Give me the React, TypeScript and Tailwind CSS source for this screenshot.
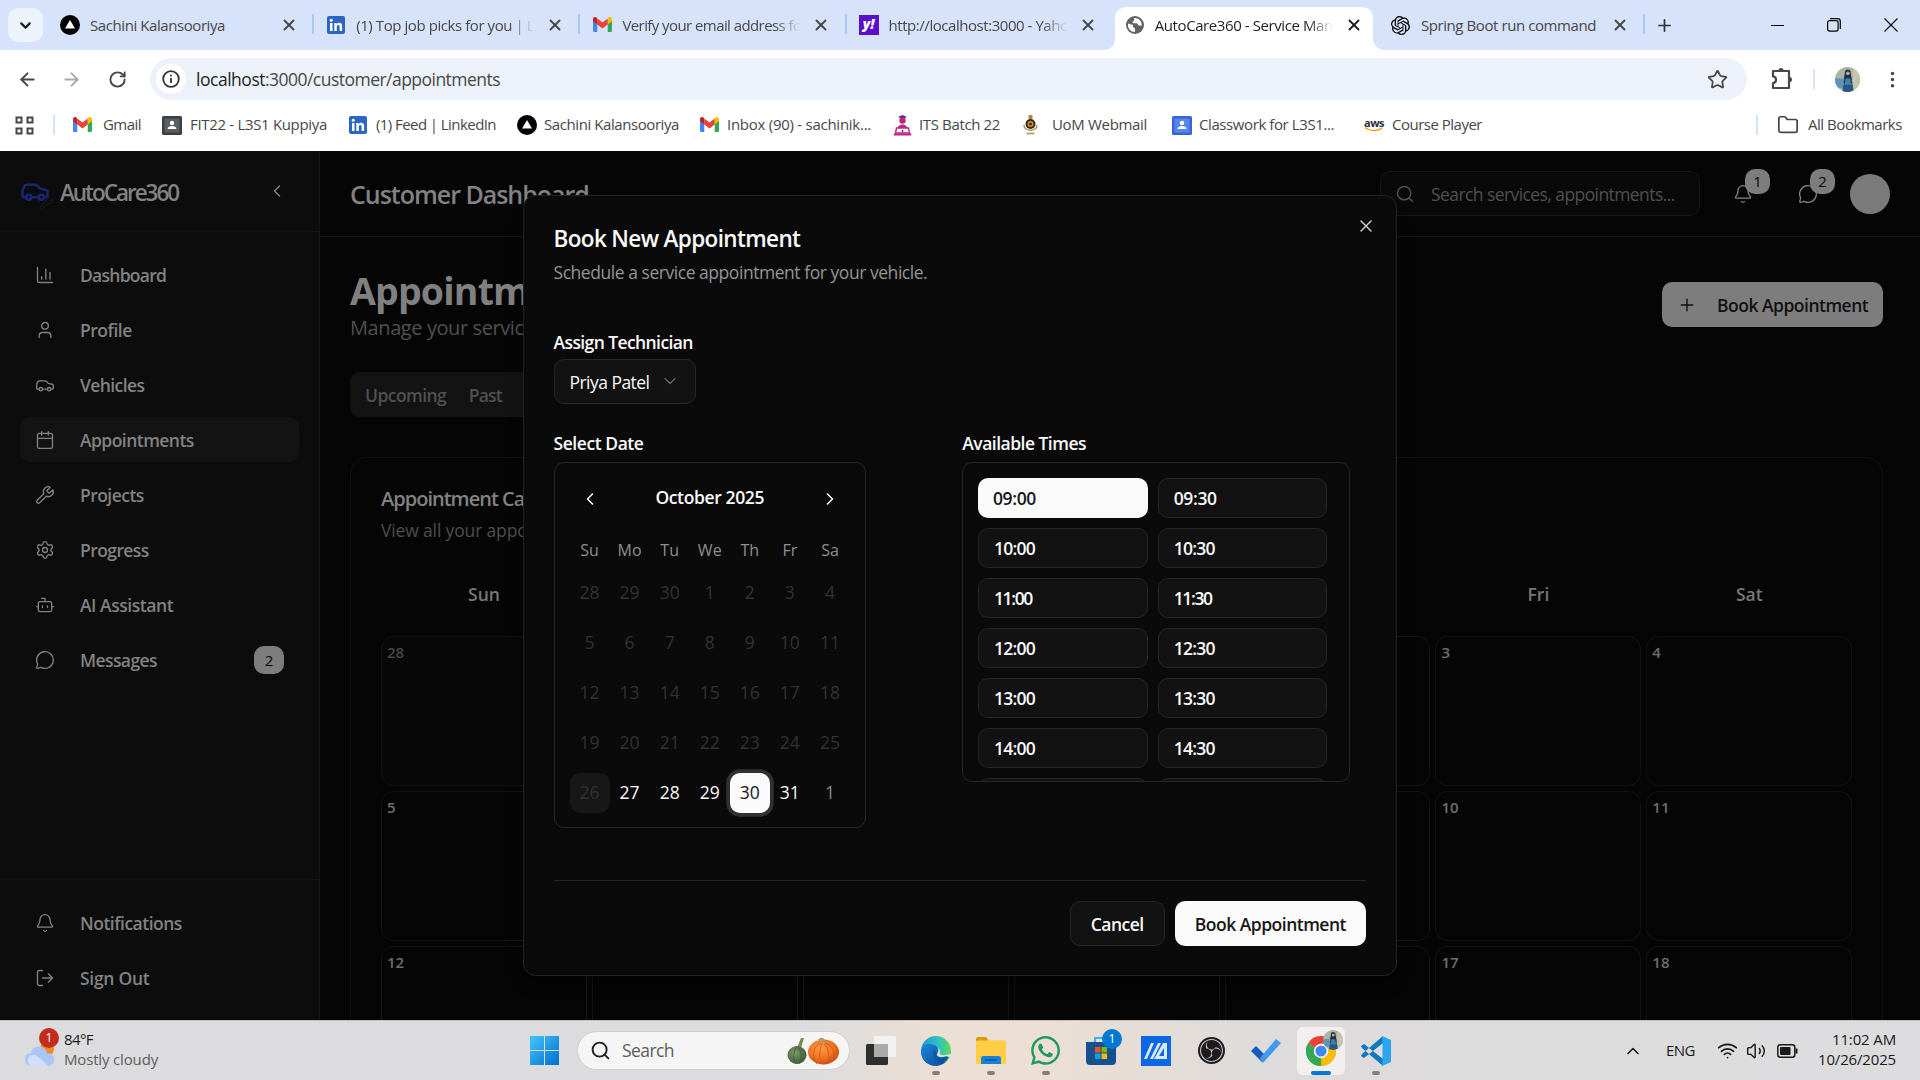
import React, { useLayoutEffect, useRef, useState } from "react";
import {
  ArrowLeft, ArrowRight, BarChart3, Bell, Bot, Calendar, Car, ChevronDown, ChevronLeft, ChevronRight,
  ChevronUp, Folder, LogOut, MessageCircle, MoreVertical, Plus, RotateCw, Search, Settings, Star,
  User, Volume2, Wifi, Wrench, X,
} from "lucide-react";
import { SiOpenai, SiObsstudio } from "react-icons/si";
import { FaWhatsapp } from "react-icons/fa";

/* Text run whose letter spacing is tuned so that it occupies a known width. */
function Fit({ w, className = "", children }: { w: number; className?: string; children: string }) {
  const ref = useRef<HTMLSpanElement>(null);
  const [ls, setLs] = useState(0);
  useLayoutEffect(() => {
    const el = ref.current as any;
    const zoom = el.currentCSSZoom ?? 1;
    setLs((w - el.getBoundingClientRect().width / zoom) / children.length);
  }, []);
  return (
    <span ref={ref} data-fit className={"inline-block whitespace-pre " + className} style={{ letterSpacing: ls }}>
      {children}
    </span>
  );
}

/* ---------- Brand marks ---------- */
const Gmail = ({ s = 19 }: { s?: number }) => (
  <svg width={s} height={s * 0.8} viewBox="0 0 20 16">
    <path d="M0 2.5V14.5A1.2 1.2 0 0 0 1.2 15.7H4.5V6Z" fill="#4285f4" />
    <path d="M20 2.5V14.5A1.2 1.2 0 0 1 18.8 15.7H15.5V6Z" fill="#34a853" />
    <path d="M15.5 2V7.8L20 4.3V2.3C20 .2 17.8-.6 16.3 .5Z" fill="#fbbc04" />
    <path d="M4.5 7.8V1.6L10 5.8L15.5 1.6V7.8L10 12Z" fill="#ea4335" />
    <path d="M0 2.3V4.3L4.5 7.8V2L3.7 .5C2.200-.6 0 .2 0 2.300Z" fill="#c5221f" />
  </svg>
);
const LinkedIn = () => (
  <span className="flex size-[18px] items-center justify-center rounded-[2px] bg-[#2c66c3]">
    <svg width="14" height="14" viewBox="0 0 14 14" fill="#fff">
      <rect x="1" y="5" width="2.500" height="8" />
      <circle cx="2.250" cy="2.300" r="1.500" />
      <path d="M5.300 5h2.400v1.200C8.300 5.200 9.200 4.800 10.200 4.800c2.200 0 2.900 1.400 2.900 3.500V13h-2.500V8.800c0-1.100-.3-1.900-1.300-1.900s-1.500.8-1.500 1.900V13H5.300Z" />
    </svg>
  </span>
);
const Triangle = () => (
  <svg width="20" height="20" viewBox="0 0 20 20"><circle cx="10" cy="10" r="10" /><path d="M10 5L15 13.500H5Z" fill="#fff" /></svg>
);
const Yahoo = () => (
  <span className="flex size-5 items-center justify-center bg-[#5b0fc8] pb-[2px] font-sans text-[14px] font-black italic leading-none text-white">y!</span>
);
const Globe = () => (
  <svg width="18" height="18" viewBox="0 0 18 18">
    <circle cx="9" cy="9" r="9" fill="#5f6368" />
    <path d="M2 7.500L7 9v2l2 1.500v3.400A7 7 0 0 1 2 7.500ZM7.500 2.200C9 3 8.200 5 7 5.300c-1 .7-.4 2 1 2h3l1.500 2.200h3.400A7 7 0 0 0 7.500 2.200Z" fill="#fff" />
  </svg>
);
const Classroom = ({ bg, inner }: { bg: string; inner: string }) => (
  <svg width="20" height="19" viewBox="0 0 20 19">
    <rect width="20" height="19" rx="1.500" fill={bg} /><rect x="2.500" y="2.500" width="15" height="14" fill={inner} />
    <circle cx="10" cy="7" r="2.200" fill="#fff" /><path d="M5.500 13c0-4 9-4 9 0Z" fill="#fff" />
  </svg>
);
const ItsMark = () => (
  <svg width="19" height="21" viewBox="0 0 19 21">
    <path d="M5 2L9.500 0L14 2L9.500 4Z" fill="#5b2a86" />
    <circle cx="9.500" cy="5.500" r="3.200" fill="#c2257f" />
    <path d="M4.500 14C4.500 8 14.500 8 14.500 14Z" fill="#c2257f" />
    <path d="M3.500 13h12l1 5h-14Z" fill="#fff" stroke="#c2257f" strokeWidth="1.400" />
    <rect x="0.500" y="18.500" width="18" height="2" rx="1" fill="#c2257f" /><circle cx="9.500" cy="16" r="1" fill="#5b2a86" />
  </svg>
);
const UomMark = () => (
  <svg width="17" height="20" viewBox="0 0 17 20">
    <rect x="6.500" y="0" width="4" height="4" rx="1" fill="#a9853f" />
    <circle cx="8.500" cy="9" r="5" fill="#3a2417" /><circle cx="8.500" cy="9" r="3" fill="#c79a2d" /><circle cx="8.500" cy="9" r="1.500" fill="#5a2a10" />
    <path d="M2 10C2 17 15 17 15 10" fill="none" stroke="#a8946c" strokeWidth="1.600" /><path d="M4.500 18.500h8" stroke="#b9a67c" strokeWidth="2" />
  </svg>
);
const Aws = () => (
  <span className="flex w-5 flex-col items-center leading-none">
    <span className="text-[11px] font-bold leading-[9px] tracking-[-0.5px] text-[#252f3e]">aws</span>
    <svg width="20" height="5" viewBox="0 0 20 5"><path d="M1 .8C6 4.500 13 4.500 18 1.200" fill="none" stroke="#f90" strokeWidth="1.400" /></svg>
  </span>
);
const Puzzle = () => (
  <svg width="22" height="24" viewBox="0 0 22 24" fill="none" stroke="#474747" strokeWidth="2.200" strokeLinejoin="round">
    <path d="M2 4H18V21H2V16C6 16 6 9.500 2 9.500Z" /><path d="M7.500 3.500a2.500 2.500 0 0 1 5 0ZM18.500 10a2.500 2.500 0 0 1 0 5Z" fill="#474747" stroke="none" />
  </svg>
);
const Portrait = ({ s }: { s: number }) => (
  <svg width={s} height={s} viewBox="0 0 24 24" className="rounded-full">
    <rect width="24" height="24" fill="#a9b5a2" /><rect y="11" width="8" height="9" fill="#5d93b5" /><rect x="17" width="7" height="24" fill="#c9c2ae" />
    <path d="M9.500 5c0-3.500 5.500-3.500 5.500 0l1.500 10h-8.500Z" fill="#1c3349" /><circle cx="12.300" cy="6" r="1.800" fill="#c99f86" />
    <path d="M8.500 11h7.500l1 7H8Z" fill="#4a80a8" /><path d="M8 17h9l1 7H7Z" fill="#28588a" /><path d="M10 8l-1 8M14.800 8l1 8" stroke="#1c3349" />
  </svg>
);

/* ---------- Browser chrome ---------- */
const tabs = [
  { icon: <Triangle />, title: "Sachini Kalansooriya", w: 135 },
  { icon: <LinkedIn />, title: "(1) Top job picks for you | L", w: 178 },
  { icon: <Gmail />, title: "Verify your email address fo", w: 179 },
  { icon: <Yahoo />, title: "http://localhost:3000 - Yaho", w: 180 },
  { icon: <Globe />, title: "AutoCare360 - Service Man", w: 178 },
  { icon: <SiOpenai size={19} />, title: "Spring Boot run command", w: 175 },
];
const tabMask = "[mask-image:linear-gradient(to_right,#000_84%,transparent_98%)]";

function TabStrip() {
  return (
    <div className="flex h-[50px] bg-[#d7e2fb]">
      <div className="ml-2 mt-2 flex h-[34px] w-[35px] items-center justify-center rounded-[10px] bg-[#ecf3fd]">
        <ChevronDown size={17} strokeWidth={3} color="#1f1f1f" />
      </div>
      <div className="ml-[5px] flex">
        {tabs.map((t, i) => {
          const active = i === 4;
          return (
            <div key={t.title} className="relative flex h-[50px] w-[266.200px] items-center pl-3">
              {active && (
                <svg className="absolute left-[-10px] top-[7px]" width="282" height="43" viewBox="0 0 282 43" fill="#fff">
                  <path d="M0 43C9 43 12 38 12 31V12C12 4 17 0 24 0H258C266 0 270 4 270 12V31C270 38 275 43 282 43Z" />
                </svg>
              )}
              <span className="relative flex w-5 items-center justify-center">{t.icon}</span>
              <span className={"relative ml-[10px] w-[182px] overflow-hidden text-[15px] leading-5 " + (i === 0 || i === 5 ? "" : tabMask) + (active ? " text-[#1f1f1f]" : " text-[#474747]")}>
                <Fit w={t.w}>{t.title}</Fit>
              </span>
              <X className="relative ml-[8px]" size={18} strokeWidth={2.500} color={active ? "#1f1f1f" : "#474747"} />
              {i !== 3 && i !== 4 && <span className="absolute right-0 top-[14px] h-5 w-[2px] rounded bg-[#a9c5f9]" />}
            </div>
          );
        })}
      </div>
      <div className="flex w-[38px] items-center justify-center"><Plus size={19} strokeWidth={2.200} color="#333" /></div>
      <div className="ml-auto flex items-center">
        <div className="flex w-[57px] justify-center"><span className="h-px w-[13px] bg-black" /></div>
        <div className="flex w-[56px] justify-center">
          <svg width="14" height="14" viewBox="0 0 14 14" fill="none" stroke="#000" strokeWidth="1.200"><rect x="0.600" y="2.600" width="10.500" height="10.500" rx="2" /><path d="M3 .6H10.500A2.800 2.800 0 0 1 13.300 3.400V11" /></svg>
        </div>
        <div className="flex w-[58px] justify-center"><svg width="14" height="14" viewBox="0 0 14 14" stroke="#111" strokeWidth="1.200"><path d="M.5 .5L13.500 13.500M13.500 .5L.5 13.500" /></svg></div>
      </div>
    </div>
  );
}

function Toolbar() {
  return (
    <div className="flex h-[58px] items-center bg-white">
      <div className="flex w-[150px] items-center pl-[17px]">
        <ArrowLeft size={21} strokeWidth={2.200} color="#474747" />
        <ArrowRight className="ml-[23px]" size={21} strokeWidth={2.200} color="#aaaaaa" />
        <RotateCw className="ml-[26px]" size={19} strokeWidth={2.400} color="#474747" />
      </div>
      <div className="flex h-[42px] w-[1597px] items-center rounded-full bg-[#edf2fa] pl-[6px]">
        <span className="flex size-[30px] items-center justify-center rounded-full bg-white">
          <svg width="18" height="18" viewBox="0 0 18 18" fill="none" stroke="#333" strokeWidth="1.800"><circle cx="9" cy="9" r="7.800" /><path d="M9 8v5M9 4.800v1.800" /></svg>
        </span>
        <span className="ml-[10px] flex text-[17.5px] leading-6">
          <Fit w={69} className="text-[#1f1f1f]">localhost</Fit>
          <Fit w={235} className="text-[#474747]">:3000/customer/appointments</Fit>
        </span>
        <Star className="ml-auto mr-[19px]" size={21} strokeWidth={2} color="#474747" />
      </div>
      <div className="ml-[24px]"><Puzzle /></div>
      <span className="ml-[20px] h-5 w-[2px] bg-[#d3e3fd]" />
      <div className="ml-[20px]"><Portrait s={25} /></div>
      <MoreVertical className="ml-[22px]" size={21} fill="#474747" color="#474747" />
    </div>
  );
}

const bookmarks: [React.ReactNode, number, string, number, number][] = [
  [<Gmail />, 30, "Gmail", 38, 89],
  [<Classroom bg="#3c4043" inner="#5a5d61" />, 28, "FIT22 - L3S1 Kuppiya", 137, 187],
  [<LinkedIn />, 27, "(1) Feed | LinkedIn", 120, 168],
  [<Triangle />, 27, "Sachini Kalansooriya", 135, 183],
  [<Gmail />, 27, "Inbox (90) - sachinik...", 144, 193],
  [<ItsMark />, 26, "ITS Batch 22", 81, 129],
  [<UomMark />, 30, "UoM Webmail", 95, 150],
  [<Classroom bg="#3566d8" inner="#5a84e6" />, 27, "Classwork for L3S1...", 135, 192],
  [<Aws />, 28, "Course Player", 90, 150],
];

function Bookmarks() {
  return (
    <div className="flex h-[43px] items-start bg-white text-[15px] text-[#474747] [&_[data-fit]]:-translate-y-px">
      <div className="flex h-[34px] w-[73px] items-center pl-[15px]">
        <svg width="19" height="19" viewBox="0 0 19 19" fill="none" stroke="#474747" strokeWidth="2"><path d="M1.500 1.500h5v5h-5zM12.500 1.500h5v5h-5zM1.500 12.500h5v5h-5zM12.500 12.500h5v5h-5z" /></svg>
        <span className="ml-[19px] h-5 w-[2px] bg-[#d3e3fd]" />
      </div>
      {bookmarks.map(([icon, gap, label, w, total]) => (
        <div key={label} className="flex h-[34px] shrink-0 items-center" style={{ width: total }}>
          <span className="flex shrink-0" style={{ width: gap }}>{icon}</span>
          <Fit w={w}>{label}</Fit>
        </div>
      ))}
      <div className="ml-auto flex h-[34px] items-center pr-[18px]">
        <span className="mr-[19px] h-5 w-[2px] bg-[#d3e3fd]" />
        <Folder className="mr-[9px]" size={22} strokeWidth={1.900} />
        <Fit w={94}>All Bookmarks</Fit>
      </div>
    </div>
  );
}

/* ---------- Application ---------- */
function NavItem({ icon: Icon, label, w, active, badge }: any) {
  return (
    <div className={"flex h-9 items-center rounded-lg px-3 text-sm font-semibold text-[#828282]" + (active ? " bg-[#131313]" : "")}>
      <Icon size={16} strokeWidth={1.600} />
      <span className="ml-5"><Fit w={w}>{label}</Fit></span>
      {badge && <span className="ml-auto flex h-[22px] w-6 items-center justify-center rounded-lg bg-[#7d7d7d] text-xs font-medium text-[#0b0b0b]">{badge}</span>}
    </div>
  );
}

function Sidebar() {
  return (
    <aside className="flex w-64 shrink-0 flex-col border-r border-[#161616] bg-[#0c0c0c]">
      <div className="flex h-[65px] items-center border-b border-[#161616] px-4">
        <span className="relative mr-2 flex">
          <Car size={24} color="#172774" />
          <Wrench className="absolute bottom-[-3px] right-[-3px]" size={12} strokeWidth={1.500} color="#1c1c1c" />
        </span>
        <Fit w={94.500} className="text-lg font-semibold text-[#828282]">AutoCare360</Fit>
        <ChevronLeft className="ml-auto mr-[10px]" size={16} strokeWidth={1.700} color="#828282" />
      </div>
      <nav className="flex flex-1 flex-col gap-2 p-4">
        <NavItem icon={BarChart3} label="Dashboard" w={69} />
        <NavItem icon={User} label="Profile" w={41.500} />
        <NavItem icon={Car} label="Vehicles" w={51.500} />
        <NavItem icon={Calendar} label="Appointments" w={91} active />
        <NavItem icon={Wrench} label="Projects" w={51} />
        <NavItem icon={Settings} label="Progress" w={55} />
        <NavItem icon={Bot} label="AI Assistant" w={74.500} />
        <NavItem icon={MessageCircle} label="Messages" w={61.500} badge="2" />
      </nav>
      <div className="flex flex-col gap-2 border-t border-[#161616] p-4">
        <NavItem icon={Bell} label="Notifications" w={81.500} />
        <NavItem icon={LogOut} label="Sign Out" w={55.500} />
      </div>
    </aside>
  );
}

function IconButton({ icon: Icon, count }: any) {
  return (
    <span className="relative flex size-9 items-center justify-center text-[#828282]">
      <Icon size={16} strokeWidth={1.600} />
      <span className="absolute -right-1 -top-0.5 flex size-5 items-center justify-center rounded-lg bg-[#7d7d7d] text-xs font-medium text-[#0b0b0b]">{count}</span>
    </span>
  );
}

const weekdays = ["Sun", "", "", "", "", "Fri", "Sat"];
const cells = ["28", "", "", "", "", "3", "4", "5", "", "", "", "", "10", "11", "12", "", "", "", "", "17", "18"];

function Main() {
  return (
    <main className="flex min-w-0 flex-1 flex-col bg-[#050505]">
      <header className="flex h-[69px] shrink-0 items-center gap-4 border-b border-[#161616] px-6">
        <Fit w={191} className="mr-auto text-xl font-semibold text-[#828282]">Customer Dashboard</Fit>
        <div className="flex h-9 w-64 items-center rounded-lg border border-[#151515] bg-[#090909] px-[11px] text-sm text-[#505050]">
          <Search size={16} strokeWidth={1.800} />
          <span className="ml-[13px]"><Fit w={195}>Search services, appointments...</Fit></span>
        </div>
        <IconButton icon={Bell} count="1" />
        <IconButton icon={MessageCircle} count="2" />
        <span className="size-8 rounded-full bg-[#7a7a7a]" />
      </header>
      <div className="flex h-[110px] justify-between pl-6 pr-[29.400px] pt-6">
        <div>
          <div className="h-9 text-3xl font-bold leading-9 text-[#808080]"><Fit w={206}>Appointments</Fit></div>
          <div className="text-base leading-6 text-[#505050]"><Fit w={252}>Manage your service appointments</Fit></div>
        </div>
        <div className="mt-3 flex h-9 items-center rounded-lg bg-[#7d7d7d] px-3 text-sm font-semibold text-[#111]">
          <Plus size={16} strokeWidth={1.600} />
          <span className="ml-4"><Fit w={121}>Book Appointment</Fit></span>
        </div>
      </div>
      <div className="ml-6 mt-[-2px] flex h-9 w-[300px] items-center gap-[18px] rounded-lg bg-[#131313] px-3 text-sm font-semibold text-[#505050]">
        <Fit w={65}>Upcoming</Fit><Fit w={26.500}>Past</Fit>
      </div>
      <section className="ml-6 mr-[29.400px] mt-8 flex-1 overflow-hidden rounded-t-[14px] border border-b-0 border-[#101010] p-6">
        <div className="text-base font-semibold leading-4 text-[#828282]"><Fit w={160}>Appointment Calendar</Fit></div>
        <div className="mt-[7px] text-sm leading-5 text-[#4d4d4d]"><Fit w={249}>View all your appointments in calendar</Fit></div>
        <div className="mt-[24px] grid grid-cols-7 gap-1">
          {weekdays.map((d, i) => (
            <div key={i} className="flex h-9 items-center justify-center text-sm font-semibold text-[#777]">{d}</div>
          ))}
        </div>
        <div className="mt-[15px] grid grid-cols-7 gap-1">
          {cells.map((n, i) => (
            <div key={i} className={"h-[120px] rounded-[10px] border border-[#121212] p-1 text-xs font-semibold leading-[17px] " + (i < 3 ? "bg-[#080808] text-[#454545]" : "text-[#6e6e6e]")}>{n}</div>
          ))}
        </div>
      </section>
    </main>
  );
}

const days = [28, 29, 30, 1, 2, 3, 4, 5, 6, 7, 8, 9, 10, 11, 12, 13, 14, 15, 16, 17, 18, 19, 20, 21, 22, 23, 24, 25, 26, 27, 28, 29, 30, 31, 1];
const dayClass = (i: number) =>
  i < 28 ? "text-[#323232]"
  : i === 28 ? "bg-[#171717] text-[#323232]"
  : i === 32 ? "bg-[#fafafa] text-[#171717] ring-[3px] ring-[#303030]"
  : i === 34 ? "text-[#8a8a8a]" : "text-[#fafafa]";
const times = ["09:00", "09:30", "10:00", "10:30", "11:00", "11:30", "12:00", "12:30", "13:00", "13:30", "14:00", "14:30"];

function BookingDialog() {
  return (
    <div className="absolute left-[418px] top-[35.200px] flex h-[625px] w-[699.600px] flex-col rounded-[10px] border border-[#232323] bg-[#0a0a0a] px-6 text-sm text-[#fafafa] shadow-lg">
      <X className="absolute right-4 top-4" size={16} strokeWidth={1.700} color="#cfcfcf" />
      <div className="mt-[22.800px] flex h-5 items-center text-lg font-semibold"><Fit w={197.500}>Book New Appointment</Fit></div>
      <div className="mt-[7.800px] leading-5 text-[#959595]"><Fit w={299}>Schedule a service appointment for your vehicle.</Fit></div>
      <div className="mt-[35.400px] leading-5 font-semibold"><Fit w={111.500}>Assign Technician</Fit></div>
      <div className="mt-[4.200px] flex h-9 w-[114px] shrink-0 items-center justify-between rounded-lg border border-[#282828] bg-[#121212] px-3 font-medium">
        <Fit w={64}>Priya Patel</Fit><ChevronDown size={16} strokeWidth={1.500} color="#666" />
      </div>
      <div className="mt-[21.300px] flex font-semibold leading-5">
        <div className="w-[327px]"><Fit w={72}>Select Date</Fit></div>
        <Fit w={99}>Available Times</Fit>
      </div>
      <div className="mt-[5.100px] flex items-start">
        <div className="h-[293px] w-[250px] rounded-lg border border-[#262626] px-3">
          <div className="mt-[13px] flex h-8 items-center justify-between px-2">
            <ChevronLeft size={16} strokeWidth={1.900} /><Fit w={87} className="-mt-1 font-semibold">October 2025</Fit><ChevronRight size={16} strokeWidth={1.900} />
          </div>
          <div className="mt-[15.500px] grid grid-cols-7 text-center text-[12.8px] leading-5 text-[#8f8f8f]">
            {["Su", "Mo", "Tu", "We", "Th", "Fr", "Sa"].map((d) => <span key={d}>{d}</span>)}
          </div>
          <div className="mt-[7.500px] grid grid-cols-7 gap-y-2">
            {days.map((d, i) => (
              <span key={i} className={"flex size-8 items-center justify-center rounded-lg " + dayClass(i)}>{d}</span>
            ))}
          </div>
        </div>
        <div className="ml-[76.700px] h-[256px] w-[310.400px] overflow-hidden rounded-lg border border-[#262626] p-3">
          <div className="grid w-[279.600px] grid-cols-2 gap-2">
            {times.map((t, i) => (
              <span key={t} className={"flex h-8 items-center rounded-lg font-semibold " + (i === 0 ? "bg-[#fafafa] px-3 text-[#171717]" : "border border-[#262626] bg-[#121212] px-3")}>
                <Fit w={i < 2 ? 34.500 : t.startsWith("11") ? 30.500 : 33}>{t}</Fit>
              </span>
            ))}
            <span className="h-8 rounded-lg border border-[#262626] bg-[#121212]" />
            <span className="h-8 rounded-lg border border-[#262626] bg-[#121212]" />
          </div>
        </div>
      </div>
      <div className="mt-[41.400px] flex justify-end gap-2 border-t border-[#262626] pt-4">
        <span className="flex h-9 items-center rounded-lg border border-[#262626] bg-[#121212] px-4 font-semibold"><Fit w={42.500}>Cancel</Fit></span>
        <span className="flex h-9 items-center rounded-lg bg-[#fafafa] px-4 font-semibold text-[#171717]"><Fit w={121}>Book Appointment</Fit></span>
      </div>
    </div>
  );
}

/* ---------- Taskbar ---------- */
const Edge = () => (
  <svg width="30" height="30" viewBox="0 0 30 30">
    <defs>
      <linearGradient id="ea" x1="0" x2="1"><stop offset="0" stopColor="#1f9ad6" /><stop offset=".6" stopColor="#2fc3c0" /><stop offset="1" stopColor="#62d957" /></linearGradient>
      <linearGradient id="eb" x1="0" y1="0" x2="1" y2="1"><stop offset="0" stopColor="#1b87d8" /><stop offset="1" stopColor="#0c4a9a" /></linearGradient>
    </defs>
    <circle cx="15" cy="15" r="15" fill="url(#ea)" />
    <path d="M0 15C1 8 8 6 13 9C18 11 18 15 16 18C15 20 18 22 22 21L28 20C25 28 18 30 14 30C5 29 0 23 0 15Z" fill="url(#eb)" />
    <path d="M16 18C14 20 18 22 23 21.500C28 21 30 18 30 14C30 19 32 20 28 20L22 28C14 27 9 20 13 13Z" fill="#0b4fa3" opacity=".6" />
    <path d="M16.500 12C19 14 17 16.500 16 18C15.500 21 21 22 25 20L31 22V17C26 20 19 20 18.500 17C20 15 18.500 12.500 16.500 12Z" fill="#ebdfd6" />
  </svg>
);
const Explorer = () => (
  <svg width="30" height="27" viewBox="0 0 30 27"><path d="M0 2a2 2 0 0 1 2-2h8l3 4H0Z" fill="#d99a10" /><rect y="3.500" width="30" height="23.500" rx="1.500" fill="#ffce45" /><path d="M5 27v-5.500a2.500 2.500 0 0 1 2.500-2.500h15a2.500 2.500 0 0 1 2.500 2.500V27Z" fill="#1583d8" /><path d="M9 23h12" stroke="#0a4f97" strokeWidth="1.500" /></svg>
);
const Store = () => (
  <span className="relative flex">
    <svg width="30" height="30" viewBox="0 0 30 30"><path d="M9 7V2h11v5" fill="none" stroke="#39b3ea" strokeWidth="2" /><path d="M0 6h30v19a4 4 0 0 1-4 4H4a4 4 0 0 1-4-4Z" fill="#16508f" /><path fill="#f25022" d="M9 11h5.500v5.500H9z" /><path fill="#7fba00" d="M15.500 11H21v5.500h-5.500z" /><path fill="#00a4ef" d="M9 17.500h5.500V23H9z" /><path fill="#ffb900" d="M15.500 17.500H21V23h-5.500z" /></svg>
    <span className="absolute -right-[6px] -top-[7px] flex size-5 items-center justify-center rounded-full bg-[#0078d4] text-[13px] text-white">1</span>
  </span>
);
const Asus = () => (
  <svg width="30" height="30" viewBox="0 0 30 30"><rect width="30" height="30" fill="#0b66e4" /><path d="M3 23L10 7H13L6 23ZM9 23L17 7H20L12 23ZM22 7H26V23H23V12L18 20H23V23H13Z" fill="#d7e8ff" /></svg>
);
const Todo = () => (
  <svg width="30" height="25" viewBox="0 0 30 25"><path d="M0 13L5 8L15 18L11 24Z" fill="#195abd" /><path d="M9 20L25 1L30 5L12 25Z" fill="#3f9af0" /></svg>
);
const Chrome = () => (
  <span className="relative flex">
    <svg width="30" height="30" viewBox="0 0 30 30">
      <path d="M15 15L2 7.500A15 15 0 0 1 28 7.500Z" fill="#ea4335" /><path d="M15 15L28 7.500A15 15 0 0 1 15 30Z" fill="#fbbc04" /><path d="M15 15V30A15 15 0 0 1 2 7.500Z" fill="#34a853" />
      <path d="M15 7.500H28A15 15 0 0 1 15 30L21.500 18.700Z" fill="#fbbc04" /><path d="M2 7.500L8.500 18.700L15 22.500L15 30A15 15 0 0 1 2 7.500Z" fill="#34a853" />
      <circle cx="15" cy="15" r="7.200" fill="#fff" /><circle cx="15" cy="15" r="5.600" fill="#4285f4" />
    </svg>
    <span className="absolute -right-[7px] -top-[6px]"><Portrait s={20} /></span>
  </span>
);
const VsCode = () => (
  <svg width="30" height="30" viewBox="0 0 30 30"><path d="M0 10L3 8L22 23V30L1 12ZM0 20L3 22L22 7V0L1 18Z" fill="#0b78bf" /><path d="M21 0L30 4V26L21 30L21.500 22.500V7.500Z" fill="#2aa5ee" /></svg>
);
const TaskView = () => (
  <svg width="30" height="29" viewBox="0 0 30 29"><rect y="8" width="22" height="21" rx="1.500" fill="#2e2e2e" /><rect x="8" width="22" height="21" rx="1.500" fill="#f4f4f4" opacity=".9" /><rect x="8" y="8" width="14" height="13" fill="#aaa" /></svg>
);
const Obs = () => <span className="flex size-[27px] items-center justify-center rounded-full bg-[#1d1b1e]"><SiObsstudio size={23} color="#c9c9c9" /></span>;
const Pumpkins = () => (
  <svg className="ml-auto mr-[10px]" width="52" height="28" viewBox="0 0 52 28">
    <defs>
      <radialGradient id="po" cx=".4" cy=".35" r=".7"><stop offset="0" stopColor="#ff9c45" /><stop offset=".6" stopColor="#ee7320" /><stop offset="1" stopColor="#c24a0e" /></radialGradient>
      <radialGradient id="pg" cx=".4" cy=".4" r=".7"><stop offset="0" stopColor="#7f9c68" /><stop offset="1" stopColor="#355232" /></radialGradient>
    </defs>
    <path d="M14 1l3 0-3 10h-4Z" fill="#7d8a4e" /><ellipse cx="10" cy="18" rx="9.500" ry="9" fill="url(#pg)" />
    <path d="M10 10C6 14 6 22 9 27M11 10C15 14 15 22 12 27" stroke="#3c5a38" fill="none" strokeWidth=".8" />
    <ellipse cx="36.500" cy="15" rx="15.500" ry="12.500" fill="url(#po)" />
    <path d="M34 6C25 9 25 22 30 27M35 7C32 12 32 22 35 27M37 7C42 10 43 22 40 27M38 6C48 9 49 20 45 25" stroke="#cf5a14" fill="none" strokeWidth=".9" />
    <path d="M31 3c2-3 5-3 7 0l-2 6-2-4Z" fill="#b99a75" />
  </svg>
);

const apps: [React.ReactNode, string][] = [
  [<TaskView />, ""], [<Edge />, "dot"], [<Explorer />, "dot"], [<FaWhatsapp size={33} color="#1f9a5c" />, "dot"], [<Store />, ""],
  [<Asus />, ""], [<Obs />, ""], [<Todo />, ""], [<Chrome />, "active"], [<VsCode />, "dot"],
];

function Taskbar() {
  return (
    <footer className="flex h-[60px] items-center border-t border-[#c4c2c2] bg-[#dcdcde] bg-[linear-gradient(90deg,#dcdcde_0%,#dcdcde_42%,#ecdfd4_49%,#ecdfd4_54%,#dddbdb_66%,#dcdcde_100%)] text-[15px]">
      <div className="flex w-[530px] items-center pl-[25px]">
        <span className="relative -translate-y-px">
          <svg width="30" height="36" viewBox="0 0 30 36"><circle cx="22" cy="17" r="7" fill="#f08a24" /><path d="M6 34a6.500 6.500 0 0 1 0-13C7 13 20 12 22 21c10 0 9 13 1 13Z" fill="#a9c6f4" /><path d="M6 34a6 6 0 0 1 1-11c4-1 8 3 16 11Z" fill="#cfe0fb" /></svg>
          <span className="absolute -top-[4px] left-[14px] flex size-5 items-center justify-center rounded-full bg-[#c42b1c] text-[13px] text-white">1</span>
        </span>
        <div className="mb-[3px] ml-[9px] flex flex-col leading-5">
          <span className="text-[#1a1a1a]"><Fit w={29}>84°F</Fit></span><span className="text-[#5c5c5c]"><Fit w={94}>Mostly cloudy</Fit></span>
        </div>
      </div>
      <svg width="29" height="29" viewBox="0 0 29 29"><defs><linearGradient id="wn" x1="0" y1="0" x2="1" y2="1"><stop offset="0" stopColor="#43c5f8" /><stop offset="1" stopColor="#0070d0" /></linearGradient></defs><path d="M0 0h14v14H0zM15 0h14v14H15zM0 15h14v14H0zM15 15h14v14H15z" fill="url(#wn)" /></svg>
      <div className="ml-[18px] flex h-[39px] w-[273px] items-center rounded-full border border-[#cfcfd0] bg-[#f6f5f5] pl-[12px]">
        <Search size={21} strokeWidth={2.200} color="#222" />
        <Fit w={52} className="ml-[11px] text-[17.5px] text-[#5c5c5c]">Search</Fit>
        <Pumpkins />
      </div>
      <div className="ml-[3px] flex">
        {apps.map(([icon, state], i) => (
          <div key={i} className="flex w-[55.100px] justify-center">
            <div className={"relative flex size-[48px] items-center justify-center rounded-md" + (state === "active" ? " bg-[#f2f0ef]" : "")}>
              {icon}
              {state === "dot" && <span className="absolute bottom-0 h-1 w-2 rounded-full bg-[#86807b]" />}
              {state === "active" && <span className="absolute bottom-0 h-1 w-5 rounded-full bg-[#0078d4]" />}
            </div>
          </div>
        ))}
      </div>
      <div className="ml-auto flex items-center pr-[24px] text-[#1a1a1a]">
        <ChevronUp size={20} strokeWidth={1.900} />
        <Fit w={29} className="ml-[23px]">ENG</Fit>
        <Wifi className="ml-[22px]" size={21} strokeWidth={2} />
        <Volume2 className="ml-[8px]" size={20} strokeWidth={1.700} />
        <svg className="ml-[11px]" width="21" height="14" viewBox="0 0 21 14"><rect x=".8" y=".8" width="17" height="12.400" rx="2.500" fill="none" stroke="#1a1a1a" strokeWidth="1.500" /><rect x="3" y="3" width="10.500" height="8" rx="1" fill="#1a1a1a" /><path d="M19.500 4.500v5" stroke="#1a1a1a" strokeWidth="2" /></svg>
        <div className="mb-[3px] ml-[19px] flex w-[79px] flex-col items-end leading-5"><Fit w={64}>11:02 AM</Fit><Fit w={78}>10/26/2025</Fit></div>
      </div>
    </footer>
  );
}

export default function App() {
  return (
    <div className="flex h-[1080px] w-[1920px] flex-col overflow-hidden font-['Open_Sans','Noto_Sans',sans-serif]">
      <TabStrip />
      <Toolbar />
      <Bookmarks />
      <div className="h-[869px] overflow-hidden">
        <div className="relative flex h-[695.200px] w-[1536px] overflow-hidden [zoom:1.25] [&_[data-fit]]:translate-y-[0.8px]">
          <Sidebar />
          <Main />
          <BookingDialog />
        </div>
      </div>
      <Taskbar />
    </div>
  );
}
